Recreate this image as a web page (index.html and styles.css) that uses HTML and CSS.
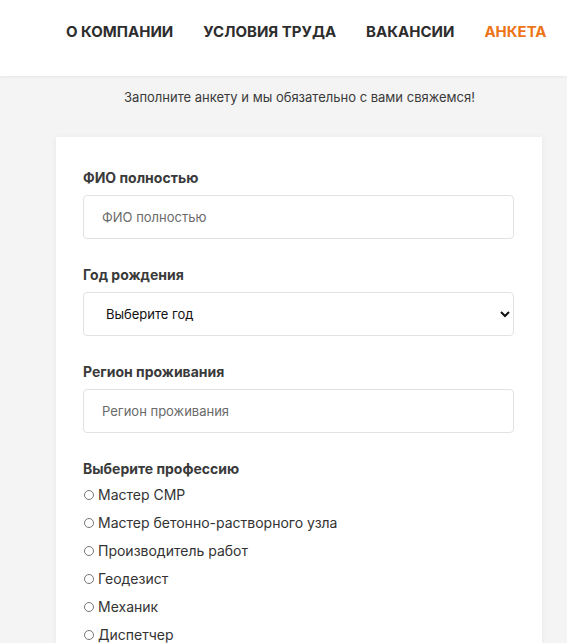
FILE: index.html
```html
<!DOCTYPE html>
<html lang="ru">
<head>
<meta charset="utf-8">
<link rel="stylesheet" href="styles.css">
</head>
<body>
<header class="header">
  <nav class="nav">
    <a class="nav-link">О КОМПАНИИ</a>
    <a class="nav-link">УСЛОВИЯ ТРУДА</a>
    <a class="nav-link">ВАКАНСИИ</a>
    <a class="nav-link active">АНКЕТА</a>
  </nav>
</header>
<main class="main">
  <p class="intro">Заполните анкету и мы обязательно с вами свяжемся!</p>
  <form class="card">
    <div class="field">
      <label class="label">ФИО полностью</label>
      <input class="input" type="text" placeholder="ФИО полностью">
    </div>
    <div class="field">
      <label class="label">Год рождения</label>
      <select class="input select"><option>Выберите год</option></select>
    </div>
    <div class="field">
      <label class="label">Регион проживания</label>
      <input class="input" type="text" placeholder="Регион проживания">
    </div>
    <div class="field">
      <label class="label">Выберите профессию</label>
      <div class="radios">
        <label class="radio"><input type="radio" name="p"> Мастер СМР</label>
        <label class="radio"><input type="radio" name="p"> Мастер бетонно-растворного узла</label>
        <label class="radio"><input type="radio" name="p"> Производитель работ</label>
        <label class="radio"><input type="radio" name="p"> Геодезист</label>
        <label class="radio"><input type="radio" name="p"> Механик</label>
        <label class="radio"><input type="radio" name="p"> Диспетчер</label>
      </div>
    </div>
  </form>
</main>
</body>
</html>
```
FILE: styles.css
```css
* { box-sizing: border-box; }
html, body { margin: 0; padding: 0; }
body {
  background: #f4f4f4;
  font-family: "Inter", "Noto Sans", sans-serif;
  color: #333;
  overflow: hidden;
}
.header {
  background: #fff;
  height: 76px;
  box-shadow: 0 1px 3px rgba(0,0,0,0.06);
}
.nav {
  display: flex;
  gap: 30px;
  padding-left: 66px;
  padding-top: 22px;
}
.nav-link {
  font-weight: 700;
  font-size: 15px;
  line-height: 20px;
  color: #2d2d2d;
}
.nav-link.active { color: #ee7418; }
.main { padding-top: 11px; }
.intro {
  margin: 0 0 30px;
  text-align: center;
  font-size: 13px;
  line-height: 20px;
  color: #3a3a3a;
  padding-left: 32px;
}
.card {
  margin-left: 56px;
  width: 486px;
  background: #fff;
  padding: 31px 28px 20px 27px;
  box-shadow: 0 0 6px rgba(0,0,0,0.05);
  display: flex;
  flex-direction: column;
  gap: 26px;
}
.field { display: flex; flex-direction: column; }
.label {
  font-weight: 700;
  font-size: 14px;
  line-height: 20px;
  color: #3a3a3a;
  margin-bottom: 7px;
}
.input {
  height: 44px;
  border: 1px solid #e2e2e2;
  border-radius: 4px;
  padding: 0 18px;
  font-family: inherit;
  font-size: 13px;
  color: #222;
  background: #fff;
}
.input::placeholder { color: #6a6a6a; }
.select { padding-left: 18px; color: #111; }
.radios { display: flex; flex-direction: column; gap: 8px; margin-top: -1px; }
.radio {
  display: flex;
  align-items: center;
  font-size: 14px;
  line-height: 20px;
  color: #333;
  gap: 4px;
}
.radio input { margin: 0 0 0 1px; width: 10px; height: 10px; }
```
